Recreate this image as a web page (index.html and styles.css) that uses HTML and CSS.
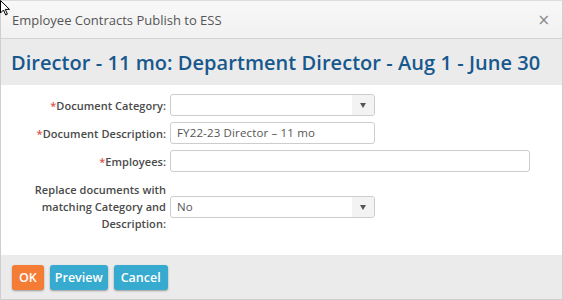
FILE: index.html
```html
<!DOCTYPE html>
<html>
<head>
<meta charset="utf-8">
<link rel="stylesheet" href="styles.css">
</head>
<body>
<div class="dialog">
  <div class="titlebar">
    <span class="title">Employee Contracts Publish to ESS</span>
    <span class="close">&#215;</span>
  </div>
  <div class="heading">Director - 11 mo: Department Director - Aug 1 - June 30</div>
  <div class="body">
    <div class="form">
      <label class="lbl"><span class="req">*</span>Document Category:</label>
      <div class="field"><div class="select"><span class="val"></span><span class="arrow"></span></div></div>

      <label class="lbl"><span class="req">*</span>Document Description:</label>
      <div class="field"><div class="input">FY22-23 Director – 11 mo</div></div>

      <label class="lbl"><span class="req">*</span>Employees:</label>
      <div class="field"><div class="input wide"></div></div>

      <label class="lbl multi">Replace documents with<br>matching Category and<br>Description:</label>
      <div class="field low"><div class="select"><span class="val">No</span><span class="arrow"></span></div></div>
    </div>
  </div>
  <div class="footer">
    <button class="btn ok">OK</button>
    <button class="btn blue">Preview</button>
    <button class="btn blue cancel">Cancel</button>
  </div>
</div>
<svg class="cursor" width="12" height="17" viewBox="0 0 12 17"><path d="M0.5 0.5 L0.5 13 L3.5 10 L5.7 15 L7.4 14.2 L5.3 9.4 L9.5 9.4 Z" fill="#fff" stroke="#000" stroke-width="1"/></svg>
</body>
</html>
```
FILE: styles.css
```css
html, body { margin: 0; padding: 0; background: #fff; }
body { font-family: "Open Sans", "DejaVu Sans", sans-serif; }
.dialog {
  width: 563px; height: 300px; box-sizing: border-box;
  border: 1px solid #cfcfcf; border-top-color: #dcdcdc;
  display: flex; flex-direction: column; background: #fff;
}
.titlebar {
  height: 37px; flex: none; border-bottom: 1px solid #d4d4d4;
  background: linear-gradient(#f8f8f8, #f1f1f1);
  display: flex; align-items: center; justify-content: space-between;
  padding: 0 12px 0 11px;
}
.title { font-size: 13px; color: #555; }
.close { font-size: 15px; color: #8a8a8a; font-family: "DejaVu Sans", sans-serif; }
.heading {
  height: 46px; flex: none; background: #ebebeb; box-sizing: border-box;
  padding: 0 0 0 10px; display: flex; align-items: center;
  font-size: 20px; font-weight: 600; color: #17588d; letter-spacing: 0.05px;
}
.body { flex: 1; padding-top: 9px; }
.form {
  display: grid; grid-template-columns: 165px auto; column-gap: 4px; row-gap: 6px;
  align-items: center;
}
.lbl { text-align: right; font-size: 11px; font-weight: 600; color: #4a4a4a; line-height: 17px; letter-spacing: 0.05px; }
.lbl.multi { margin-top: 3px; }
.field.low { margin-top: 4px; }
.req { color: #d9534f; }
.field { display: flex; }
.select, .input {
  width: 205px; height: 22px; box-sizing: border-box;
  border: 1px solid #cdcdcd; border-radius: 3px; background: #fff;
  font-size: 11.5px; color: #555; line-height: 20px; padding-left: 6px; letter-spacing: 0.15px;
}
.select { display: flex; justify-content: space-between; padding-left: 0; }
.select .val { padding-left: 6px; }
.select .arrow {
  width: 22px; background: #f3f3f3; border-radius: 0 3px 3px 0;
  position: relative;
}
.select .arrow::after {
  content: ""; position: absolute; left: 8px; top: 8px;
  border-left: 3.5px solid transparent; border-right: 3.5px solid transparent; border-top: 5px solid #555;
}
.input.wide { width: 360px; }
.footer {
  height: 44px; flex: none; background: #ebebeb; display: flex; align-items: center;
  padding: 0 0 0 11px; gap: 6px;
}
.btn {
  height: 25px; border: none; border-radius: 3px; color: #fff;
  font-family: "Open Sans", sans-serif; font-size: 12.5px; font-weight: 600;
  padding: 0 5px; box-shadow: 0 1px 2px rgba(0,0,0,0.35); margin: 0;
}
.btn.ok { background: #f47c34; padding: 0 7px; }
.btn.blue { background: #36abcf; }
.btn.cancel { padding: 0 7px; }
.cursor { position: absolute; left: 0; top: 0; }
```
